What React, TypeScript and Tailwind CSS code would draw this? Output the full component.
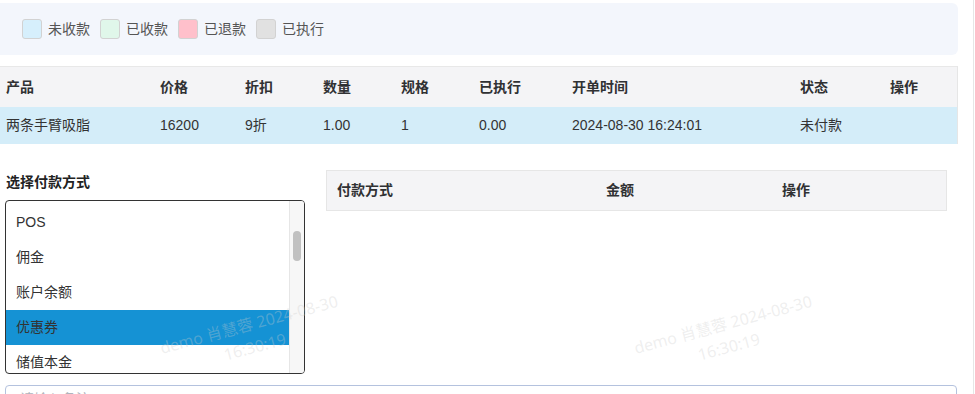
import React from "react";

const legend = [
  { label: "未收款", color: "bg-[#d6effc]" },
  { label: "已收款", color: "bg-[#e0f7ea]" },
  { label: "已退款", color: "bg-[#ffc0cb]" },
  { label: "已执行", color: "bg-[#e1e1e1]" },
];

const headers = ["产品", "价格", "折扣", "数量", "规格", "已执行", "开单时间", "状态", "操作"];
const row = ["两条手臂吸脂", "16200", "9折", "1.00", "1", "0.00", "2024-08-30 16:24:01", "未付款", ""];
const options = ["POS", "佣金", "账户余额", "优惠券", "储值本金"];

function Watermark({ className }: { className: string }) {
  return (
    <div
      className={`pointer-events-none absolute w-[220px] h-[46px] text-center leading-[23px] text-[16px] whitespace-nowrap rotate-[-15deg] text-[rgba(205,205,205,0.32)] font-['Noto_Sans','Noto_Sans_CJK_SC',sans-serif] ${className}`}
    >
      <div>demo 肖慧蓉 2024-08-30</div>
      <div>16:30:19</div>
    </div>
  );
}

export default function App() {
  return (
    <div className="relative w-[975px] h-[394px] overflow-hidden bg-white flex font-['Liberation_Sans','Noto_Sans_CJK_SC',sans-serif] text-[#333]">
      <div className="w-[958px] shrink-0">
        {/* legend */}
        <div className="mt-[3px] h-[52px] bg-[#f3f6fc] rounded-r-[6px] flex items-center pl-[22px]">
          {legend.map((l) => (
            <div key={l.label} className="flex items-center mr-[10px]">
              <div className={`w-[20px] h-[20px] rounded-[3px] border border-[#d2d2d2] ${l.color}`} />
              <span className="ml-[6px] text-[14px] text-[#555]">{l.label}</span>
            </div>
          ))}
        </div>

        {/* order table */}
        <div className="mt-[11px] border-r border-[#e6e6e6]">
          <div className="grid grid-cols-[154px_85px_78px_78px_78px_93px_228px_90px_1fr] h-[41px] items-center bg-[#f4f4f6] border-t border-[#e8e8e8] text-[14px] font-bold text-[#303133]">
            {headers.map((h) => (
              <div key={h} className="pl-[6px]">{h}</div>
            ))}
          </div>
          <div className="grid grid-cols-[154px_85px_78px_78px_78px_93px_228px_90px_1fr] h-[37px] items-center bg-[#d4edf9] text-[14px] text-[#333]">
            {row.map((c, i) => (
              <div key={i} className="pl-[6px] whitespace-nowrap">{c}</div>
            ))}
          </div>
        </div>

        {/* payment section */}
        <div className="mt-[26px] flex">
          <div className="ml-[5px] w-[300px] flex flex-col">
            <div className="pt-[2px] pl-[1px] h-[22px] leading-[20px] text-[14px] font-bold text-[#222]">选择付款方式</div>
            <div className="mt-[8px] h-[174px] border border-[#333] rounded-[4px] overflow-hidden flex">
              <div className="flex-1 pt-[4px]">
                {options.map((o) => (
                  <div
                    key={o}
                    className={`h-[35px] flex items-center pl-[10px] text-[14px] text-[#333] ${o === "优惠券" ? "bg-[#1592d4]" : ""}`}
                  >
                    {o}
                  </div>
                ))}
              </div>
              <div className="w-[15px] bg-[#f7f7f7] border-l border-[#e6e6e6] pt-[30px] pl-[3px]">
                <div className="w-[8px] h-[30px] rounded-full bg-[#c1c1c1]" />
              </div>
            </div>
          </div>
          <div className="ml-[21px] w-[621px]">
            <div className="grid grid-cols-[279px_176px_1fr] h-[41px] items-center bg-[#f4f4f6] border border-[#e6e6e6] text-[14px] font-bold text-[#303133]">
              <div className="pl-[10px]">付款方式</div>
              <div>金额</div>
              <div>操作</div>
            </div>
          </div>
        </div>

        {/* remark input */}
        <div className="mt-[11px] ml-[5px] w-[952px] h-[32px] border border-[#b4c2de] rounded-[4px] pl-[14px] pt-[3px] leading-[20px] text-[14px] text-[#b0b4bc]">
          请输入备注
        </div>
      </div>
      <div className="ml-[15px] w-px h-full bg-[#e6e6e6]" />

      <Watermark className="left-[142px] top-[313px]" />
      <Watermark className="left-[616px] top-[313px]" />
    </div>
  );
}
